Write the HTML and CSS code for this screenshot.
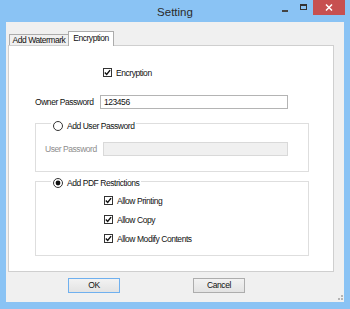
FILE: index.html
```html
<!DOCTYPE html>
<html>
<head>
<meta charset="utf-8">
<link rel="stylesheet" href="styles.css">
</head>
<body>
<div class="window">
  <div class="titlebar">
    <span class="title">Setting</span>
    <div class="controls">
      <span class="min"></span>
      <span class="max"></span>
      <span class="close"><svg width="8" height="7" viewBox="0 0 8 7"><path d="M1 0.5 L7 6.5 M7 0.5 L1 6.5" stroke="#fff" stroke-width="1.5" fill="none"/></svg></span>
    </div>
  </div>
  <div class="client">
    <div class="tabs">
      <div class="tab">Add Watermark</div>
      <div class="tab active">Encryption</div>
    </div>
    <div class="page">
      <div class="check enc">
        <svg class="cb" width="9" height="9" viewBox="0 0 9 9"><rect x="0.5" y="0.5" width="8" height="8" fill="#fff" stroke="#333"/><path d="M1.8 4.4 L3.7 6.4 L7.1 2.1" fill="none" stroke="#111" stroke-width="1.4"/></svg>
        <span>Encryption</span>
      </div>
      <div class="field owner">
        <span class="label owner-label">Owner Password</span>
        <div class="input owner-input">123456</div>
      </div>
      <div class="group g1">
        <div class="legend">
          <svg class="rb" width="10" height="10" viewBox="0 0 10 10"><circle cx="5" cy="5" r="4.5" fill="#fff" stroke="#333"/></svg>
          <span>Add User Password</span>
        </div>
        <div class="field user">
          <span class="label user-label disabled">User Password</span>
          <div class="input user-input disabled"></div>
        </div>
      </div>
      <div class="group g2">
        <div class="legend">
          <svg class="rb" width="10" height="10" viewBox="0 0 10 10"><circle cx="5" cy="5" r="4.5" fill="#fff" stroke="#333"/><circle cx="5" cy="5" r="2.4" fill="#111"/></svg>
          <span>Add PDF Restrictions</span>
        </div>
        <div class="checks">
          <div class="check">
            <svg class="cb" width="9" height="9" viewBox="0 0 9 9"><rect x="0.5" y="0.5" width="8" height="8" fill="#fff" stroke="#333"/><path d="M1.8 4.4 L3.7 6.4 L7.1 2.1" fill="none" stroke="#111" stroke-width="1.4"/></svg>
            <span>Allow Printing</span>
          </div>
          <div class="check">
            <svg class="cb" width="9" height="9" viewBox="0 0 9 9"><rect x="0.5" y="0.5" width="8" height="8" fill="#fff" stroke="#333"/><path d="M1.8 4.4 L3.7 6.4 L7.1 2.1" fill="none" stroke="#111" stroke-width="1.4"/></svg>
            <span>Allow Copy</span>
          </div>
          <div class="check">
            <svg class="cb" width="9" height="9" viewBox="0 0 9 9"><rect x="0.5" y="0.5" width="8" height="8" fill="#fff" stroke="#333"/><path d="M1.8 4.4 L3.7 6.4 L7.1 2.1" fill="none" stroke="#111" stroke-width="1.4"/></svg>
            <span>Allow Modify Contents</span>
          </div>
        </div>
      </div>
    </div>
    <div class="buttons">
      <div class="btn default">OK</div>
      <div class="btn cancel">Cancel</div>
    </div>
    <svg class="grip" width="5" height="5" viewBox="0 0 5 5"><rect x="3" y="0" width="2" height="2" fill="#b5b5b5"/><rect x="0" y="3" width="2" height="2" fill="#b5b5b5"/><rect x="3" y="3" width="2" height="2" fill="#b5b5b5"/></svg>
  </div>
</div>
</body>
</html>
```
FILE: styles.css
```css
* { box-sizing: border-box; margin: 0; padding: 0; }
body {
  width: 350px;
  height: 309px;
  overflow: hidden;
  background: #8ac3f4;
  font-family: "Liberation Sans", Arial, sans-serif;
  font-size: 8.5px;
  letter-spacing: -0.45px;
  color: #111;
}
.window { width: 350px; height: 309px; display: flex; flex-direction: column; }
.titlebar {
  height: 22px;
  display: grid;
  grid-template-columns: 1fr auto 1fr;
  align-items: start;
}
.title {
  grid-column: 2;
  font-size: 11.5px;
  letter-spacing: 0;
  line-height: 14px;
  margin-top: 5px;
  color: #2b2b2b;
}
.controls {
  grid-column: 3;
  justify-self: end;
  display: flex;
  align-items: flex-start;
  margin-right: 5px;
}
.min { width: 6px; height: 2px; background: #444; margin-top: 10px; }
.max { width: 7px; height: 6px; border: 1px solid #333; border-top-width: 2px; margin-left: 12px; margin-top: 4px; }
.close {
  width: 32px; height: 15px; margin-left: 6px;
  background: #c75050;
  display: flex; align-items: center; justify-content: center;
}
.client {
  height: 280px;
  margin: 0 6px;
  background: #f0f0f0;
  padding: 9px 0 0 2px;
  display: flex;
  flex-direction: column;
}
.tabs {
  height: 14px;
  display: flex;
  align-items: flex-end;
  padding-left: 1px;
  position: relative;
  z-index: 1;
}
.tab {
  width: 60px;
  height: 11px;
  border: 1px solid #acacac;
  border-bottom: none;
  background: #f0f0f0;
  text-align: center;
  line-height: 11px;
}
.tab.active {
  width: 46px;
  height: 15px;
  margin-bottom: -1px;
  margin-left: -1px;
  background: #fff;
  line-height: 12px;
}
.page {
  width: 326px;
  height: 227px;
  border: 1px solid #cfcfcf;
  background: #fff;
  display: flex;
  flex-direction: column;
  align-items: flex-start;
  padding-left: 26px;
}
.check { display: flex; align-items: center; height: 13px; gap: 4px; }
.cb, .rb { flex: none; display: block; }
.enc { margin-top: 20px; margin-left: 68px; }
.field { display: flex; align-items: center; }
.owner { margin-top: 16px; }
.owner-label { width: 65px; }
.input {
  height: 14px;
  border: 1px solid #b4b4b4;
  background: #fff;
  padding-left: 3px;
  line-height: 12px;
}
.owner-input { width: 188px; }
.group {
  width: 274px;
  border: 1px solid #dedede;
  display: flex;
  flex-direction: column;
  align-items: flex-start;
}
.legend {
  height: 11px;
  display: flex;
  align-items: center;
  gap: 4px;
  padding: 0 2px;
  margin-left: 15px;
  background: #fff;
}
.g1 { margin-top: 14px; padding-bottom: 15px; }
.g1 .legend { margin-top: -4px; }
.user { margin-top: 11px; margin-left: 9px; }
.user-label { width: 58px; }
.disabled { color: #8d8d8d; }
.input.disabled { background: #f0f0f0; border-color: #d9d9d9; }
.user-input { width: 185px; }
.g2 { margin-top: 9px; padding-bottom: 10px; }
.g2 .legend { margin-top: -5px; }
.checks {
  display: flex;
  flex-direction: column;
  gap: 6px;
  margin-top: 6px;
  margin-left: 68px;
}
.buttons { display: flex; margin-top: 6px; margin-left: 60px; gap: 73px; }
.btn {
  width: 52px;
  height: 15px;
  border: 1px solid #adadad;
  background: linear-gradient(#f2f2f2, #e3e3e3);
  text-align: center;
  line-height: 13px;
}
.btn.default { border-color: #6fb0ef; }
.grip { align-self: flex-end; margin-top: auto; margin-right: 1px; margin-bottom: 2px; }
```
